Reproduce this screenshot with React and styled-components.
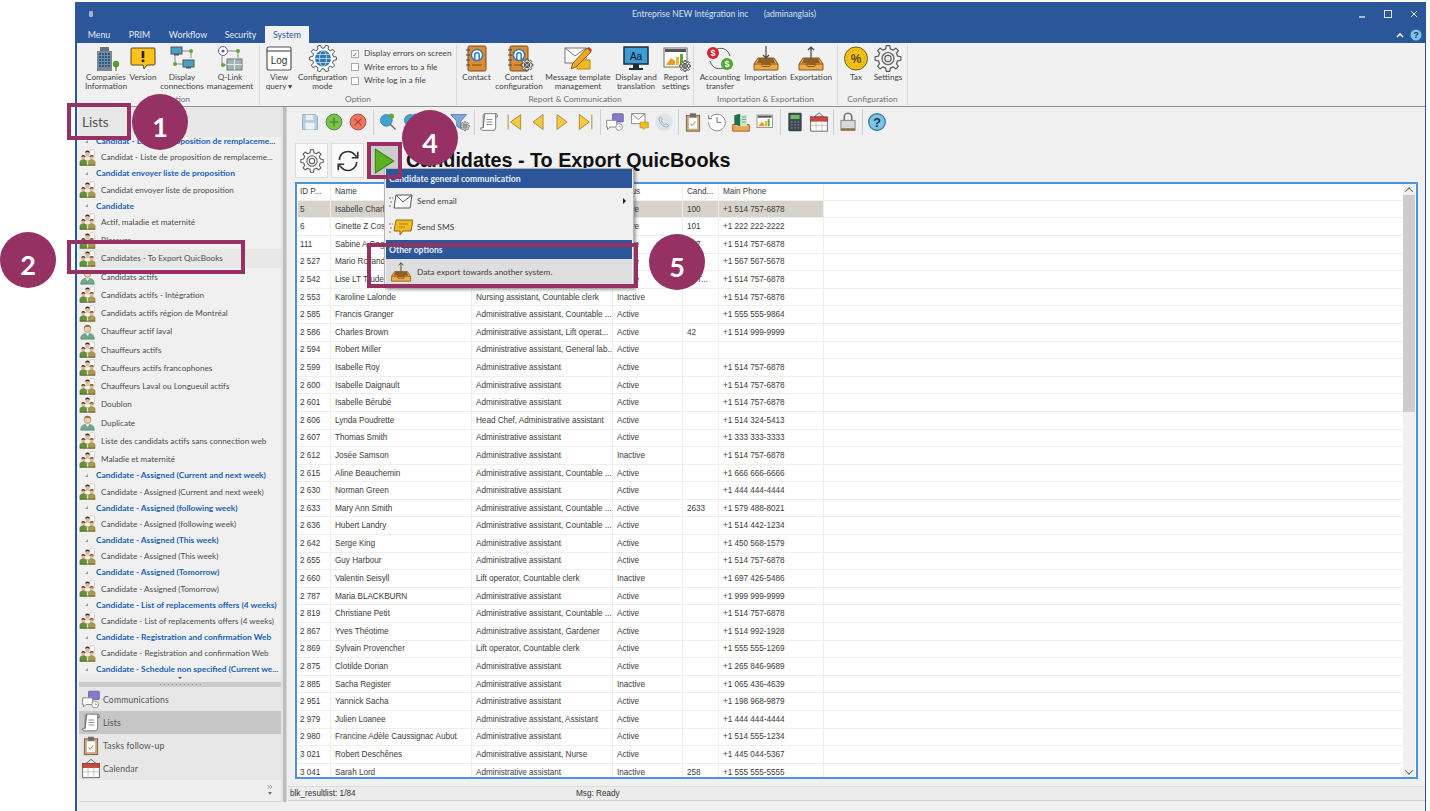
import React from 'react';
import styled, { createGlobalStyle } from 'styled-components';

const BLUE = '#2b579a';
const PLUM = '#953163';
const UI_FONT = "Lato, 'Open Sans', sans-serif";

const GlobalStyle = createGlobalStyle`
  html, body { margin: 0; padding: 0; background: #fff; }
  body { font-family: ${UI_FONT}; color: #333; }
  * { box-sizing: border-box; }
`;

const Page = styled.div`
  position: relative;
  width: 1430px;
  height: 811px;
  padding: 2px 4px 0 75px;
  overflow: hidden;
`;

const Window = styled.div`
  display: flex;
  flex-direction: column;
  height: 100%;
  background: #f0f0f0;
  border-left: 2px solid ${BLUE};
  border-right: 1px solid ${BLUE};
`;

/* title bar */
const TitleBar = styled.div`
  background: ${BLUE};
  height: 41px;
  display: flex;
  flex-direction: column;
  margin-left: -2px;
`;

const TitleRow = styled.div`
  height: 24px;
  display: flex;
  align-items: center;
  padding-left: 14px;
  color: #d8e0ef;
  font-size: 8.5px;
`;

const AppDot = styled.span`
  width: 4px;
  height: 6px;
  background: #9db2d3;
  border-radius: 1px;
`;

const TitleText = styled.div`
  margin-left: 539px;
  width: 184px;
  display: flex;
  justify-content: space-between;
  white-space: nowrap;
`;

const WinControls = styled.div`
  margin-left: auto;
  width: 68px;
  display: flex;
  justify-content: space-between;
  align-items: center;
  padding-right: 6px;
`;

const TabRow = styled.div`
  flex: 1;
  display: flex;
  align-items: flex-end;
  padding-left: 4px;
  padding-right: 3px;
`;

const Tab = styled.div`
  width: ${p => p.$w}px;
  height: 17px;
  display: flex;
  align-items: center;
  justify-content: center;
  font-size: 8.8px;
  color: ${p => (p.$active ? BLUE : '#e4eaf4')};
  background: ${p => (p.$active ? '#f1f1f1' : 'transparent')};
`;

const RibbonHelp = styled.div`
  margin-left: auto;
  display: flex;
  align-items: center;
  gap: 6px;
  height: 17px;
`;

/* ribbon */
const Ribbon = styled.div`
  height: 64px;
  display: flex;
  background: #f1f1f1;
  border-bottom: 1px solid #8f8f8f;
  padding-left: 1px;
`;

const RibbonGroup = styled.div`
  width: ${p => p.$w}px;
  height: 60px;
  margin-top: 2px;
  border-right: 1px solid #d9d9d9;
  display: flex;
  flex-direction: column;
`;

const RibbonItems = styled.div`
  flex: 1;
  display: flex;
  padding-left: ${p => p.$pad || 0}px;
`;

const RibbonItem = styled.div`
  width: ${p => p.$w}px;
  display: flex;
  flex-direction: column;
  align-items: center;
  font-size: 8.2px;
  line-height: 9.4px;
  text-align: center;
  color: #444;
  white-space: pre-line;
  svg { height: 27px; width: 30px; display: block; margin-bottom: 1px; }
`;

const RibbonLabel = styled.div`
  text-align: center;
  color: #707070;
  font-size: 8.4px;
  line-height: 11px;
  height: 11px;
`;

const Checks = styled.div`
  display: flex;
  flex-direction: column;
  gap: 4px;
  padding: 4px 0 0 2px;
`;

const CheckRow = styled.div`
  display: flex;
  align-items: center;
  gap: 5px;
  font-size: 8.3px;
  line-height: 9.5px;
  color: #444;
  white-space: nowrap;
`;

const CheckBox = styled.span`
  width: 8px;
  height: 8px;
  border: 1px solid #a9a9a9;
  background: #fff;
  font-size: 7px;
  line-height: 6px;
  color: #666;
  text-align: center;
`;

/* body */
const Body = styled.div`
  flex: 1;
  display: flex;
  min-height: 0;
`;

const Sidebar = styled.div`
  width: 204px;
  display: flex;
  flex-direction: column;
  padding-left: 2px;
`;

const PanelTitle = styled.div`
  height: 30px;
  display: flex;
  align-items: center;
  padding-left: 3px;
  font-size: 13.5px;
  color: #555;
  background: #e7e7e7;
  flex: none;
`;

const TreeList = styled.div`
  flex: 1;
  overflow: hidden;
  min-height: 0;
  background: #f0f0f0;
`;

const TreeInner = styled.div`
  margin-top: -3px;
`;

const GroupRow = styled.div`
  height: 14.1px;
  display: flex;
  align-items: center;
  color: #1a5fb4;
  font-weight: 700;
  font-size: 8.4px;
  white-space: nowrap;
  padding-left: 6px;
  gap: 8px;
`;

const Twist = styled.span`
  width: 0;
  height: 0;
  border-left: 3px solid transparent;
  border-bottom: 3px solid #999;
`;

const ItemRow = styled.div`
  height: 18.25px;
  display: flex;
  align-items: center;
  font-size: 8.15px;
  color: #4c4c4c;
  white-space: nowrap;
  background: ${p => (p.$selected ? '#e8e8e8' : 'transparent')};
  svg { width: 17px; height: 17px; flex: none; margin-right: 5px; }
`;

const ScrollBand = styled.div`
  height: 8px;
  flex: none;
  background: #eaeaea;
  display: flex;
  justify-content: center;
  align-items: center;
  &::after {
    content: '';
    border-left: 2px solid transparent;
    border-right: 2px solid transparent;
    border-top: 2px solid #555;
  }
`;

const Grip = styled.div`
  height: 5px;
  flex: none;
  background: #cbcbcb;
  display: flex;
  justify-content: center;
  align-items: center;
  &::after {
    content: '';
    width: 41px;
    height: 1px;
    background: repeating-linear-gradient(90deg, #8c8c8c 0 1px, transparent 1px 4px);
  }
`;

const NavRow = styled.div`
  height: ${p => p.$h}px;
  flex: none;
  display: flex;
  align-items: center;
  font-size: 8.7px;
  letter-spacing: 0.15px;
  color: #555;
  background: ${p => (p.$active ? '#c6c6c6' : '#e7e7e7')};
  padding-left: 2px;
  svg { width: 20px; height: 21px; margin-right: 2px; flex: none; }
`;

const NavFooter = styled.div`
  height: 22px;
  flex: none;
  display: flex;
  justify-content: flex-end;
  padding: 4px 8px 0 0;
  background: #efefef;
  border-bottom: 1px solid #d8d8d8;
`;

const MoreChevrons = styled.svg`
  width: 6px;
  height: 12px;
`;

const Splitter = styled.div`
  width: 6px;
  flex: none;
  background: #bdbdbd;
  border-left: 2px solid #e3e3e3;
  border-right: 1px solid #d5d5d5;
`;

const Main = styled.div`
  flex: 1;
  min-width: 0;
  display: flex;
  flex-direction: column;
`;

const Toolbar = styled.div`
  height: 30px;
  flex: none;
  display: flex;
  align-items: center;
  padding-left: 11px;
`;

const ToolButton = styled.div`
  width: 24.2px;
  height: 24px;
  display: flex;
  align-items: center;
  justify-content: center;
  svg { width: 20px; height: 20px; }
`;

const ToolSep = styled.div`
  width: 5px;
  height: 26px;
  flex: none;
  display: flex;
  justify-content: center;
  &::after { content: ''; width: 1px; background: #cfcfcf; }
`;

const HeadingRow = styled.div`
  height: 35px;
  margin: 6px 0 4px 8px;
  flex: none;
  display: flex;
  align-items: center;
`;

const SquareButton = styled.div`
  width: 33px;
  height: 35px;
  margin-right: 3px;
  background: ${p => (p.$active ? '#cdcdcd' : '#fafafa')};
  border: 1px solid ${p => (p.$active ? '#bbb' : '#dcdcdc')};
  display: flex;
  align-items: center;
  justify-content: center;
  svg { width: 26px; height: 26px; }
`;

const Heading = styled.h1`
  margin: 0 0 0 3px;
  font-family: 'Liberation Sans', sans-serif;
  font-size: 19.75px;
  font-weight: 700;
  color: #111;
  white-space: nowrap;
`;

const TableFrame = styled.div`
  margin: 0 7px 0 8px;
  height: 597px;
  flex: none;
  background: #fff;
  border: 2px solid #4d94dc;
  display: flex;
  overflow: hidden;
`;

const TableArea = styled.div`
  flex: 1;
  min-width: 0;
  padding-left: 1px;
  overflow: hidden;
`;

const Row = styled.div`
  display: grid;
  grid-template-columns: 33px 141px 141px 70px 36px 105px 1fr;
  height: ${p => (p.$head ? 16.8 : 17.6)}px;
  border-bottom: 1px solid #eeeeee;
  font-family: 'Liberation Sans', sans-serif;
  font-size: 8.2px;
  letter-spacing: -0.04px;
  color: #3c3c3c;
`;

const Cell = styled.div`
  display: flex;
  align-items: center;
  padding-left: ${p => (p.$first ? 2 : 4)}px;
  white-space: nowrap;
  overflow: hidden;
  border-right: ${p => (p.$last ? 'none' : '1px solid #eeeeee')};
  background: ${p => (p.$selected ? '#d6d3cc' : 'transparent')};
`;

const ScrollTrack = styled.div`
  width: 12px;
  flex: none;
  margin-right: 1px;
  background: #f0f0f0;
  display: flex;
  flex-direction: column;
  align-items: center;
  padding-top: 1px;
`;

const ScrollArrow = styled.span`
  height: 10px;
  display: flex;
  align-items: center;
  &::after {
    content: '';
    width: 5px;
    height: 5px;
    border-left: 1px solid #666;
    border-top: 1px solid #666;
    transform: ${p => (p.$down ? 'rotate(225deg) translate(1px, 1px)' : 'rotate(45deg) translate(1px, 1px)')};
  }
`;

const ScrollThumb = styled.div`
  width: 12px;
  height: 217px;
  background: #cdcdcd;
`;

const ScrollGap = styled.div`
  flex: 1;
`;

const StatusBar = styled.div`
  height: 15px;
  margin-top: 7px;
  margin-left: 1px;
  flex: none;
  display: flex;
  align-items: center;
  background: #ececec;
  border-top: 1px solid #dcdcdc;
  border-bottom: 1px solid #cfcfcf;
  font-size: 8.2px;
  color: #333;
  font-family: 'Liberation Sans', sans-serif;
`;

const StatusCell = styled.div`
  width: ${p => p.$w}px;
  padding-left: 2px;
`;

const WindowFoot = styled.div`
  height: 9px;
  flex: none;
  background: #f0f0f0;
`;

/* popup menu */
const Menu = styled.div`
  position: absolute;
  left: 384px;
  top: 168px;
  width: 250px;
  height: 120px;
  background: #f0f0f0;
  border: 1px solid #b5b5b5;
  box-shadow: 2px 2px 3px rgba(0, 0, 0, 0.35);
  font-size: 8.35px;
  color: #3f3f3f;
`;

const MenuHead = styled.div`
  height: 19px;
  margin: 0 1px;
  padding-left: 3px;
  background: ${BLUE};
  color: #e9eef7;
  font-weight: 700;
  font-size: ${p => p.$size}px;
  display: flex;
  align-items: center;
`;

const MenuItem = styled.div`
  height: 26px;
  margin: 0 1px;
  padding-left: 3px;
  display: flex;
  align-items: center;
  background: ${p => (p.$hover ? '#dedede' : 'transparent')};
  svg { width: 24px; height: 22px; margin-right: 4px; }
`;

const MenuArrow = styled.span`
  margin-left: auto;
  margin-right: 6px;
  border-left: 3px solid #222;
  border-top: 3px solid transparent;
  border-bottom: 3px solid transparent;
`;

/* call-outs drawn over the capture */
const Callout = styled.div`
  position: absolute;
  left: ${p => p.$x}px;
  top: ${p => p.$y}px;
  width: ${p => p.$w}px;
  height: ${p => p.$h}px;
  border: 4px solid ${PLUM};
`;

const Badge = styled.div`
  position: absolute;
  left: ${p => p.$x - 28}px;
  top: ${p => p.$y - 28}px;
  width: 56px;
  height: 56px;
  padding-top: 8px;
  border-radius: 50%;
  background: ${PLUM};
  color: #fff;
  font-family: Lato, sans-serif;
  font-weight: 700;
  font-size: 27px;
  display: flex;
  align-items: center;
  justify-content: center;
`;

/* drawings */
const gearPath = (cx, cy, r1, r2, n = 8) => {
  const pts = [];
  const step = (Math.PI * 2) / n;
  for (let i = 0; i < n; i++) {
    const a = i * step;
    [[-0.3, r1], [-0.17, r2], [0.17, r2], [0.3, r1]].forEach(([k, r]) => {
      pts.push(`${(cx + r * Math.cos(a + k * step)).toFixed(2)} ${(cy + r * Math.sin(a + k * step)).toFixed(2)}`);
    });
  }
  return `M${pts.join('L')}Z`;
};

const Gear = ({ cx = 16, cy = 14, r = 12, stroke = '#5a5a5a', fill = 'none', sw = 1.2 }) => (
  <g fill={fill} stroke={stroke} strokeWidth={sw} strokeLinejoin="round">
    <path d={gearPath(cx, cy, r * 0.76, r)} />
    <circle cx={cx} cy={cy} r={r * 0.46} />
    <circle cx={cx} cy={cy} r={r * 0.24} />
  </g>
);

const Building = () => (
  <svg viewBox="0 0 30 27">
    <rect x="6" y="6" width="15" height="20" fill="#7d8793" />
    <rect x="9" y="2" width="9" height="4" fill="#6a7480" />
    {[8, 11, 14, 17, 20].map(y => [8, 11, 14, 17].map(x => (
      <rect key={`${x}${y}`} x={x} y={y} width="2" height="2" fill="#1f5f8f" />
    )))}
    <circle cx="25" cy="19" r="3.2" fill="#5c9a32" />
    <rect x="24.5" y="21" width="1" height="5" fill="#6b4a2a" />
  </svg>
);

const Version = () => (
  <svg viewBox="0 0 30 27">
    <path d="M4 3h22a1 1 0 0 1 1 1v15a1 1 0 0 1-1 1h-7l-3 4-1-4H4a1 1 0 0 1-1-1V4a1 1 0 0 1 1-1z" fill="#fcc419" stroke="#5b4a1e" strokeWidth="1" />
    <rect x="13.7" y="6" width="2.6" height="7" fill="#222" />
    <rect x="13.7" y="14.5" width="2.6" height="2.6" fill="#222" />
  </svg>
);

const Connections = () => (
  <svg viewBox="0 0 30 27">
    <path d="M8 10v9h8M12 6h12v7" fill="none" stroke="#8a8a8a" />
    <rect x="4" y="2" width="11" height="7" fill="#4a9fc9" stroke="#555" />
    <rect x="16" y="15" width="11" height="7" fill="#4a9fc9" stroke="#555" />
    <rect x="7" y="9" width="5" height="1.5" fill="#555" />
    <rect x="19" y="22" width="5" height="1.5" fill="#555" />
    <circle cx="24" cy="6" r="2" fill="#62a83a" />
    <circle cx="8" cy="19" r="2" fill="#62a83a" />
  </svg>
);

const QLink = () => (
  <svg viewBox="0 0 30 27">
    <circle cx="8" cy="6" r="4.5" fill="#fff" stroke="#6a5aa8" />
    <circle cx="8" cy="6" r="1.6" fill="#6a5aa8" />
    <path d="M13 6h10v7M7 11v9h4" fill="none" stroke="#8a8a8a" />
    <circle cx="23" cy="6" r="2" fill="#62a83a" />
    <circle cx="8" cy="20" r="2" fill="#62a83a" />
    <rect x="12" y="14" width="15" height="11" fill="#9fb4b4" stroke="#6d7878" />
    <path d="M19.5 14v11M12 19.5h15" stroke="#e8e8e8" />
  </svg>
);

const LogWindow = () => (
  <svg viewBox="0 0 30 27">
    <rect x="3" y="2" width="24" height="23" rx="1.5" fill="#fff" stroke="#555" strokeWidth="1.2" />
    <path d="M3 6h24" stroke="#555" strokeWidth="1.2" />
    <text x="15" y="19" fontSize="10" textAnchor="middle" fill="#333" fontFamily="Liberation Sans, sans-serif">Log</text>
  </svg>
);

const GlobeGear = () => (
  <svg viewBox="0 0 30 27">
    <path d={gearPath(15, 13.5, 10.5, 13.5, 10)} fill="#fff" stroke="#555" />
    <circle cx="15" cy="13.5" r="8" fill="#2f78b5" />
    <g fill="none" stroke="#cfe3f3" strokeWidth="0.8">
      <ellipse cx="15" cy="13.5" rx="3.5" ry="8" />
      <path d="M7 13.5h16M8.2 9.5h13.6M8.2 17.5h13.6" />
    </g>
  </svg>
);

const ContactBook = ({ gear }) => (
  <svg viewBox="0 0 30 27">
    <rect x="6" y="1" width="18" height="25" rx="1.5" fill="#d98b35" stroke="#7d4d17" />
    <path d="M4 5h4M4 10h4M4 15h4M4 20h4" stroke="#444" strokeWidth="1.2" />
    <circle cx="15" cy="10" r="5.6" fill="#fff" stroke="#2f78b5" strokeWidth="1.5" />
    <path d="M12.8 15v-5a2.2 2.2 0 0 1 4.4 0v5" fill="none" stroke="#2f78b5" strokeWidth="1.5" />
    <path d="M10 20h10" stroke="#7d4d17" />
    {gear && <Gear cx={23} cy={20} r={6} stroke="#444" fill="#e8e8e8" sw={1} />}
  </svg>
);

const MessagePencil = () => (
  <svg viewBox="0 0 30 27">
    <rect x="2" y="3" width="21" height="15" fill="#fff" stroke="#777" />
    <path d="M2 3l10 8 11-8" fill="none" stroke="#777" />
    <rect x="14" y="15" width="13" height="9" fill="#f2b91d" stroke="#b98a12" />
    <path d="M8 24l2-6L24 3l4 4L13 22z" fill="#f4a521" stroke="#6b4a12" strokeWidth="0.8" />
    <path d="M24 3l4 4 1-2-3-3z" fill="#c8372d" />
  </svg>
);

const Monitor = () => (
  <svg viewBox="0 0 30 27">
    <rect x="3" y="2" width="24" height="17" fill="#3f9bd8" stroke="#1f2d3a" strokeWidth="1.5" />
    <text x="15" y="15" fontSize="10" textAnchor="middle" fill="#111" fontFamily="Liberation Sans, sans-serif">Aa</text>
    <rect x="12" y="19" width="6" height="4" fill="#1f2d3a" />
    <rect x="8" y="23" width="14" height="2" fill="#1f2d3a" />
  </svg>
);

const ReportChart = ({ gear = true }) => (
  <svg viewBox="0 0 30 27">
    <rect x="3" y="3" width="23" height="19" fill="#fff" stroke="#6d6d6d" />
    <rect x="4" y="4" width="21" height="3" fill="#555" />
    <path d="M5 20l5-7 4 3v4z" fill="#e89b2f" />
    <rect x="15" y="12" width="3" height="8" fill="#e8b62f" />
    <rect x="19" y="9" width="3" height="11" fill="#62a83a" />
    {gear && <Gear cx={24} cy={21} r={5.5} stroke="#444" fill="#e8e8e8" sw={1} />}
  </svg>
);

const Accounting = () => (
  <svg viewBox="0 0 30 27">
    <path d="M12 4c7-2 11 1 13 7M18 23C11 25 7 22 5 16" fill="none" stroke="#555" />
    <circle cx="8" cy="8" r="6" fill="#d4232b" />
    <circle cx="22" cy="19" r="6" fill="#4ea72e" />
    <text x="8" y="11" fontSize="9" fontWeight="700" textAnchor="middle" fill="#fff" fontFamily="Liberation Sans, sans-serif">$</text>
    <text x="22" y="22" fontSize="9" fontWeight="700" textAnchor="middle" fill="#fff" fontFamily="Liberation Sans, sans-serif">$</text>
  </svg>
);

const Tray = ({ dir }) => (
  <svg viewBox="0 0 30 27">
    <path d="M7 13h16l4 6v6H3v-6z" fill="#eda94a" stroke="#8a5a1c" />
    <path d="M8 13h14l2 5h-4l-1 2h-8l-1-2H6z" fill="#8f5f24" />
    <path d="M3 19h7l1.5 2.5h7L20 19h7" fill="none" stroke="#8a5a1c" />
    {dir === 'down' && <path d="M15 1v12M12 10l3 3 3-3" fill="none" stroke="#444" strokeWidth="1.2" />}
    {dir === 'up' && <path d="M15 13V2M12 5l3-3 3 3" fill="none" stroke="#444" strokeWidth="1.2" />}
  </svg>
);

const Tax = () => (
  <svg viewBox="0 0 30 27">
    <circle cx="15" cy="13.5" r="11.5" fill="#f7c21a" stroke="#6d5a14" />
    <circle cx="15" cy="13.5" r="8.5" fill="none" stroke="#c99a12" strokeDasharray="1.5 1.5" />
    <text x="15" y="18" fontSize="12" fontWeight="700" textAnchor="middle" fill="#5b4a1e" fontFamily="Liberation Sans, sans-serif">%</text>
  </svg>
);

const Settings = () => (
  <svg viewBox="0 0 30 27"><Gear cx={15} cy={13.5} r={13} /></svg>
);

const People = ({ single }) => (
  <svg viewBox="0 0 20 20">
    {single ? (
      <>
        <path d="M2 19c0-5 3-7 8-7s8 2 8 7z" fill="#6fa98a" stroke="#44705a" strokeWidth="0.6" />
        <path d="M7.5 12l2.5 3 2.5-3z" fill="#fff" />
        <circle cx="10" cy="7" r="4" fill="#f0cba8" stroke="#7d5a3c" strokeWidth="0.5" />
        <path d="M6 6c0-3 2-4 4-4s4 1 4 4l-2-1.5H8z" fill="#8a6a4a" />
      </>
    ) : (
      <>
        <rect x="13" y="1" width="5.5" height="7" fill="#fff" stroke="#b5b5b5" strokeWidth="0.6" />
        <path d="M5.5 14c0-3.5 1.7-6 4.5-6s4.5 2.5 4.5 6z" fill="#f4f1e8" stroke="#5a4a3a" strokeWidth="0.5" />
        <circle cx="10" cy="5" r="2.6" fill="#e7b98d" />
        <path d="M7.4 4.5c0-2 1.2-2.8 2.6-2.8s2.6.8 2.6 2.8l-2.6-1z" fill="#3a2a20" />
        <circle cx="5" cy="10" r="2.3" fill="#e7b98d" />
        <path d="M2.8 9.5c0-1.8 1-2.4 2.2-2.4s2.2.6 2.2 2.4L5 8.7z" fill="#5a3d24" />
        <path d="M1 19v-3.5c0-2 1.6-3 4-3s4 1 4 3V19z" fill="#5f9438" stroke="#3f6a22" strokeWidth="0.4" />
        <circle cx="15" cy="10" r="2.3" fill="#e7b98d" />
        <path d="M12.8 9.5c0-1.8 1-2.4 2.2-2.4s2.2.6 2.2 2.4l-2.2-.8z" fill="#7a5a2c" />
        <path d="M11 19v-3.5c0-2 1.6-3 4-3s4 1 4 3V19z" fill="#a99a45" stroke="#75692b" strokeWidth="0.4" />
        <path d="M1 19h18" stroke="#6b5a30" />
      </>
    )}
  </svg>
);

const CommIcon = () => (
  <svg viewBox="0 0 24 24">
    <rect x="9" y="2" width="13" height="10" rx="1" fill="#8878cc" stroke="#5a4fa0" strokeWidth="0.8" />
    <path d="M2 10h12v8H6l-3 3v-3H2z" fill="#fff" stroke="#777" />
    <circle cx="17" cy="18" r="4" fill="#fff" stroke="#888" />
    <path d="M17 16v2h2" fill="none" stroke="#888" strokeWidth="0.8" />
  </svg>
);

const Scroll = () => (
  <svg viewBox="0 0 24 24">
    <path d="M7 2h13v17a3 3 0 0 1-3 3H4a2.5 2.5 0 0 1-2-3h3z" fill="#fff" stroke="#666" />
    <path d="M7 2a2.5 2.5 0 0 0-2 2.5V19M20 2a2 2 0 0 1 2 2v2h-2" fill="none" stroke="#666" />
    <path d="M9 9h7M9 12h7M9 15h7" stroke="#777" />
  </svg>
);

const Clipboard = () => (
  <svg viewBox="0 0 24 24">
    <rect x="4" y="4" width="16" height="19" fill="#c9a77a" stroke="#6d5236" />
    <rect x="7" y="7" width="10" height="13" fill="#fff" />
    <rect x="8.5" y="1.5" width="7" height="5" fill="#6d6d6d" />
    <path d="M9 14l2 2.5 4-5" fill="none" stroke="#62a83a" strokeWidth="1.2" />
  </svg>
);

const CalendarIcon = () => (
  <svg viewBox="0 0 24 24">
    <path d="M12 1l6 5H6z" fill="none" stroke="#555" />
    <rect x="2" y="6" width="20" height="17" fill="#fff" stroke="#555" />
    <rect x="2" y="6" width="20" height="5" fill="#d0453c" stroke="#8a2a24" strokeWidth="0.6" />
    <path d="M2 16h20M8.5 11v12M15.5 11v12" stroke="#bbb" />
  </svg>
);

const Save = () => (
  <svg viewBox="0 0 24 24">
    <path d="M3 3h15l3 3v15H3z" fill="#b9cde0" stroke="#93a7ba" />
    <rect x="7" y="3.5" width="9" height="6" fill="#e7eef5" />
    <rect x="6.5" y="13" width="11" height="8" fill="#edf2f7" />
  </svg>
);

const Disc = ({ fill, stroke, mark }) => (
  <svg viewBox="0 0 24 24">
    <circle cx="12" cy="12" r="9.5" fill={fill} stroke={stroke} />
    <path d={mark} fill="none" stroke={stroke} strokeWidth="1.3" />
  </svg>
);

const Search = ({ dot = '#62a83a' }) => (
  <svg viewBox="0 0 24 24">
    <path d="M14 14l7 7" stroke="#666" strokeWidth="1.6" />
    <circle cx="10" cy="10" r="7" fill="#3fa5cf" stroke="#2b7ea3" />
    <circle cx="16" cy="5" r="3.2" fill={dot} />
  </svg>
);

const Filter = () => (
  <svg viewBox="0 0 24 24">
    <path d="M1 3h19l-7 8v9l-5-3v-6z" fill="#7fa6d6" stroke="#5579a8" />
    <Gear cx={18} cy={17} r={5.5} stroke="#555" fill="#ddd" sw={0.8} />
  </svg>
);

const Nav = ({ d }) => (
  <svg viewBox="0 0 24 24"><path d={d} fill="#f6c945" stroke="#a8892a" strokeWidth="1.1" strokeLinejoin="round" /></svg>
);

const MailBubble = () => (
  <svg viewBox="0 0 24 24">
    <rect x="2" y="2" width="16" height="12" fill="#fff" stroke="#777" />
    <path d="M2 2l8 7 8-7" fill="none" stroke="#777" />
    <path d="M12 12h10v7h-4l-1.5 2-1-2H12z" fill="#f2b91d" stroke="#a8892a" strokeWidth="0.7" />
  </svg>
);

const Phone = () => (
  <svg viewBox="0 0 24 24">
    <circle cx="12" cy="12" r="10.5" fill="#dde5e8" />
    <path d="M8 6l2 3-1 1.5c.5 2 2 3.5 4 4.5l1.5-1 3 2-1.5 2c-5 .5-10-5-10-10.5z" fill="none" stroke="#8fa3aa" />
  </svg>
);

const History = () => (
  <svg viewBox="0 0 24 24">
    <path d="M4.5 6A10 10 0 1 1 2 12" fill="#fff" stroke="#777" />
    <path d="M2 4v4h4M12 6v6.5h5" fill="none" stroke="#555" />
  </svg>
);

const ExcelTray = () => (
  <svg viewBox="0 0 24 24">
    <path d="M2 15h20v8H2z" fill="#eda94a" stroke="#8a5a1c" />
    <rect x="6" y="3" width="13" height="14" fill="#cfe5d5" />
    <path d="M4 4l7-2v15l-7-2z" fill="#1e7145" />
    <path d="M13 6h5M13 9h5M13 12h5" stroke="#5b9a73" />
  </svg>
);

const Calculator = () => (
  <svg viewBox="0 0 24 24">
    <rect x="4" y="1" width="16" height="22" rx="1" fill="#3c4650" />
    <rect x="6.5" y="3.5" width="11" height="5" fill="#6fbf57" />
    <path d="M7 12h10M7 15.5h10M7 19h10" stroke="#7d8791" strokeDasharray="2 2" strokeWidth="1.6" />
  </svg>
);

const Lock = () => (
  <svg viewBox="0 0 24 24">
    <path d="M7.5 10V6a4.5 4.5 0 0 1 9 0v4" fill="none" stroke="#777" strokeWidth="2" />
    <rect x="3.5" y="10" width="17" height="12" fill="#d8d8d8" stroke="#777" />
    <rect x="3.5" y="19.5" width="17" height="2.5" fill="#8a7440" />
  </svg>
);

const Help = ({ r = 10 }) => (
  <svg viewBox="0 0 24 24">
    <circle cx="12" cy="12" r={r} fill="#7cc3e6" stroke="#2b6f99" strokeWidth="1.4" />
    <text x="12" y="17.5" textAnchor="middle" fontSize="15" fontWeight="700" fill="#12344d" fontFamily="Liberation Sans, sans-serif">?</text>
  </svg>
);

const Refresh = () => (
  <svg viewBox="0 0 24 24">
    <path d="M4 11a8 8 0 0 1 14-5l2 2M20 13a8 8 0 0 1-14 5l-2-2" fill="none" stroke="#333" strokeWidth="1.5" />
    <path d="M21 3.5V9h-5.5M3 20.5V15h5.5" fill="none" stroke="#333" strokeWidth="1.5" />
  </svg>
);

const Play = () => (
  <svg viewBox="0 0 24 24"><path d="M4 1l17 11L4 23z" fill="#58b21f" stroke="#3d7f15" /></svg>
);

const SendMail = () => (
  <svg viewBox="0 0 24 22">
    <path d="M0 8h4M1 12h3M0 16h3" stroke="#777" strokeDasharray="2 1" />
    <path d="M7 5h16l-2 13H5z" fill="#fff" stroke="#555" />
    <path d="M7 5l7 7 9-7" fill="none" stroke="#555" />
  </svg>
);

const SendSms = () => (
  <svg viewBox="0 0 24 22">
    <path d="M0 8h4M1 12h3M0 16h3" stroke="#777" strokeDasharray="2 1" />
    <path d="M7 4h17l-2 11H14l-3 4v-4H5z" fill="#f2b91d" stroke="#8a6a14" />
    <path d="M10 8h9M10 11h6" stroke="#a8892a" />
  </svg>
);

/* data */
const ribbon = [
  { w: 182, label: 'Information', pad: 7, items: [
    [Building, 'Companies\nInformation', 42], [Version, 'Version', 32], [Connections, 'Display\nconnections', 46], [QLink, 'Q-Link\nmanagement', 50],
  ] },
  { w: 197, label: 'Option', pad: 2, items: [
    [LogWindow, 'View\nquery ▾', 34], [GlobeGear, 'Configuration\nmode', 53],
  ], checks: true },
  { w: 237, label: 'Report & Communication', pad: 1, items: [
    [() => <ContactBook />, 'Contact', 37], [() => <ContactBook gear />, 'Contact\nconfiguration', 48], [MessagePencil, 'Message template\nmanagement', 70], [Monitor, 'Display and\ntranslation', 46], [ReportChart, 'Report\nsettings', 34],
  ] },
  { w: 144, label: 'Importation & Exportation', pad: 3, items: [
    [Accounting, 'Accounting\ntransfer', 46], [() => <Tray dir="down" />, 'Importation', 45], [() => <Tray dir="up" />, 'Exportation', 46],
  ] },
  { w: 70, label: 'Configuration', pad: 3, items: [
    [Tax, 'Tax', 30], [Settings, 'Settings', 34],
  ] },
];

const h = text => ({ text, head: true });
const i = (text, extra) => ({ text, ...extra });
const tree = [
  h('Candidat - Liste de proposition de remplaceme...'), i('Candidat - Liste de proposition de remplaceme...'),
  h('Candidat envoyer liste de proposition'), i('Candidat envoyer liste de proposition'),
  h('Candidate'), i('Actif, maladie et maternité'), i('Blessure'),
  i('Candidates - To Export QuicBooks', { selected: true }), i('Candidats actifs', { single: true }),
  i('Candidats actifs - Intégration'), i('Candidats actifs région de Montréal'), i('Chauffeur actif laval', { single: true }),
  i('Chauffeurs actifs'), i('Chauffeurs actifs francophones'), i('Chauffeurs Laval ou Longueuil actifs'),
  i('Doublon'), i('Duplicate', { single: true }), i('Liste des candidats actifs sans connection web'), i('Maladie et maternité'),
  h('Candidate - Assigned (Current and next week)'), i('Candidate - Assigned (Current and next week)'),
  h('Candidate - Assigned (following week)'), i('Candidate - Assigned (following week)'),
  h('Candidate - Assigned (This week)'), i('Candidate - Assigned (This week)'),
  h('Candidate - Assigned (Tomorrow)'), i('Candidate - Assigned (Tomorrow)'),
  h('Candidate - List of replacements offers (4 weeks)'), i('Candidate - List of replacements offers (4 weeks)'),
  h('Candidate - Registration and confirmation Web'), i('Candidate - Registration and confirmation Web'),
  h('Candidate - Schedule non specified (Current we...'),
];

const AA = 'Administrative assistant';
const M = '+1 514 757-6878';
const rows = [
  ['5', 'Isabelle Charlebois', AA, 'Active', '100', M],
  ['6', 'Ginette Z Cossette', AA, 'Active', '101', '+1 222 222-2222'],
  ['111', 'Sabine A Gagnon', AA, 'Active', '107', M],
  ['2 527', 'Mario Rollande', AA, 'Active', '', '+1 567 567-5678'],
  ['2 542', 'Lise LT Trudeau', AA, 'Active', 'LST...', M],
  ['2 553', 'Karoline Lalonde', 'Nursing assistant, Countable clerk', 'Inactive', '', M],
  ['2 585', 'Francis Granger', 'Administrative assistant, Countable ...', 'Active', '', '+1 555 555-9864'],
  ['2 586', 'Charles Brown', 'Administrative assistant, Lift operat...', 'Active', '42', '+1 514 999-9999'],
  ['2 594', 'Robert Miller', 'Administrative assistant, General lab...', 'Active', '', ''],
  ['2 599', 'Isabelle Roy', AA, 'Active', '', M],
  ['2 600', 'Isabelle Daignault', AA, 'Active', '', M],
  ['2 601', 'Isabelle Bérubé', AA, 'Active', '', M],
  ['2 606', 'Lynda Poudrette', 'Head Chef, Administrative assistant', 'Active', '', '+1 514 324-5413'],
  ['2 607', 'Thomas Smith', AA, 'Active', '', '+1 333 333-3333'],
  ['2 612', 'Josée Samson', AA, 'Inactive', '', M],
  ['2 615', 'Aline Beauchemin', 'Administrative assistant, Countable ...', 'Active', '', '+1 666 666-6666'],
  ['2 630', 'Norman Green', AA, 'Active', '', '+1 444 444-4444'],
  ['2 633', 'Mary Ann Smith', 'Administrative assistant, Countable ...', 'Active', '2633', '+1 579 488-8021'],
  ['2 636', 'Hubert Landry', 'Administrative assistant, Countable ...', 'Active', '', '+1 514 442-1234'],
  ['2 642', 'Serge King', AA, 'Active', '', '+1 450 568-1579'],
  ['2 655', 'Guy Harbour', AA, 'Active', '', M],
  ['2 660', 'Valentin Seisyll', 'Lift operator, Countable clerk', 'Inactive', '', '+1 697 426-5486'],
  ['2 787', 'Maria BLACKBURN', AA, 'Active', '', '+1 999 999-9999'],
  ['2 819', 'Christiane Petit', 'Administrative assistant, Countable ...', 'Active', '', M],
  ['2 867', 'Yves Théotime', 'Administrative assistant, Gardener', 'Active', '', '+1 514 992-1928'],
  ['2 869', 'Sylvain Provencher', 'Lift operator, Countable clerk', 'Active', '', '+1 555 555-1269'],
  ['2 875', 'Clotilde Dorian', AA, 'Active', '', '+1 265 846-9689'],
  ['2 885', 'Sacha Register', AA, 'Inactive', '', '+1 065 436-4639'],
  ['2 951', 'Yannick Sacha', AA, 'Active', '', '+1 198 968-9879'],
  ['2 979', 'Julien Loanee', 'Administrative assistant, Assistant', 'Active', '', '+1 444 444-4444'],
  ['2 980', 'Francine Adèle Caussignac Aubut', AA, 'Active', '', '+1 514 555-1234'],
  ['3 021', 'Robert Deschênes', 'Administrative assistant, Nurse', 'Active', '', '+1 445 044-5367'],
  ['3 041', 'Sarah Lord', AA, 'Inactive', '258', '+1 555 555-5555'],
];

const toolbar = [
  <Save />, <Disc fill="#7cc24a" stroke="#3d7f25" mark="M12 7v10M7 12h10" />, <Disc fill="#ee7560" stroke="#a83f30" mark="M8 8l8 8M16 8l-8 8" />, 'sep',
  <Search />, <Search dot="#3fa5cf" />, <Search dot="#e89b2f" />, <Filter />, 'sep',
  <Scroll />, <Nav d="M5 3v18M20 3v18L8 12z" />, <Nav d="M18 3v18L6 12z" />, <Nav d="M6 3v18l12-9z" />, <Nav d="M19 3v18M4 3v18l12-9z" />, 'sep',
  <CommIcon />, <MailBubble />, <Phone />, 'sep',
  <Clipboard />, <History />, <ExcelTray />, <ReportChart gear={false} />, 'sep',
  <Calculator />, <CalendarIcon />, 'sep', <Lock />, 'sep', <Help />,
];

const nav = [
  ['Communications', <CommIcon />, 24], ['Lists', <Scroll />, 23, true], ['Tasks follow-up', <Clipboard />, 23], ['Calendar', <CalendarIcon />, 23],
];

export default function App() {
  return (
    <Page>
      <GlobalStyle />
      <Window>
        <TitleBar>
          <TitleRow>
            <AppDot />
            <TitleText>
              <span>Entreprise NEW Intégration inc</span>
              <span>(adminanglais)</span>
            </TitleText>
            <WinControls>
              <svg width="10" height="10" viewBox="0 0 10 10"><path d="M2 8h6" stroke="#dfe6f2" strokeWidth="1.4" /></svg>
              <svg width="10" height="10" viewBox="0 0 10 10"><rect x="1.5" y="1.5" width="7" height="7" fill="none" stroke="#dfe6f2" /></svg>
              <svg width="10" height="10" viewBox="0 0 10 10"><path d="M2 2l6 6M8 2l-6 6" stroke="#dfe6f2" /></svg>
            </WinControls>
          </TitleRow>
          <TabRow>
            <Tab $w={40}>Menu</Tab>
            <Tab $w={41}>PRIM</Tab>
            <Tab $w={56}>Workflow</Tab>
            <Tab $w={49}>Security</Tab>
            <Tab $w={44} $active>System</Tab>
            <RibbonHelp>
              <svg width="8" height="8" viewBox="0 0 8 8"><path d="M1 6l3-3 3 3" fill="none" stroke="#fff" strokeWidth="1.6" /></svg>
              <svg width="12" height="12" viewBox="0 0 24 24"><circle cx="12" cy="12" r="11" fill="#7cc3e6" /><text x="12" y="18" textAnchor="middle" fontSize="17" fontWeight="700" fill="#12344d" fontFamily="Liberation Sans, sans-serif">?</text></svg>
            </RibbonHelp>
          </TabRow>
        </TitleBar>

        <Ribbon>
          {ribbon.map(group => (
            <RibbonGroup key={group.label} $w={group.w}>
              <RibbonItems $pad={group.pad}>
                {group.items.map(([Icon, label, w]) => (
                  <RibbonItem key={label} $w={w}>
                    <Icon />
                    {label}
                  </RibbonItem>
                ))}
                {group.checks && (
                  <Checks>
                    <CheckRow><CheckBox>✓</CheckBox>Display errors on screen</CheckRow>
                    <CheckRow><CheckBox />Write errors to a file</CheckRow>
                    <CheckRow><CheckBox />Write log in a file</CheckRow>
                  </Checks>
                )}
              </RibbonItems>
              <RibbonLabel>{group.label}</RibbonLabel>
            </RibbonGroup>
          ))}
        </Ribbon>

        <Body>
          <Sidebar>
            <PanelTitle>Lists</PanelTitle>
            <TreeList>
              <TreeInner>
                {tree.map((row, idx) => (row.head ? (
                  <GroupRow key={idx}><Twist />{row.text}</GroupRow>
                ) : (
                  <ItemRow key={idx} $selected={row.selected}><People single={row.single} />{row.text}</ItemRow>
                )))}
              </TreeInner>
            </TreeList>
            <ScrollBand />
            <Grip />
            {nav.map(([label, icon, height, active]) => (
              <NavRow key={label} $h={height} $active={active}>{icon}{label}</NavRow>
            ))}
            <NavFooter>
              <MoreChevrons viewBox="0 0 6 12">
                <path d="M0.5 1l2 2-2 2M3 1l2 2-2 2" fill="none" stroke="#888" strokeWidth="0.7" />
                <path d="M1 8h4L3 11z" fill="#777" />
              </MoreChevrons>
            </NavFooter>
          </Sidebar>
          <Splitter />
          <Main>
            <Toolbar>
              {toolbar.map((item, idx) => (item === 'sep'
                ? <ToolSep key={idx} />
                : <ToolButton key={idx}>{item}</ToolButton>))}
            </Toolbar>
            <HeadingRow>
              <SquareButton><svg viewBox="0 0 30 30"><Gear cx={15} cy={15} r={13} /></svg></SquareButton>
              <SquareButton><Refresh /></SquareButton>
              <SquareButton $active><Play /></SquareButton>
              <Heading>Candidates - To Export QuicBooks</Heading>
            </HeadingRow>
            <TableFrame>
              <TableArea>
                <Row $head>
                  {['ID P...', 'Name', 'Functions', 'Status', 'Cand...', 'Main Phone', ''].map((t, c) => (
                    <Cell key={c} $first={c === 0} $last={c === 6}>{t}</Cell>
                  ))}
                </Row>
                {rows.map((row, r) => (
                  <Row key={row[0]}>
                    {row.map((t, c) => <Cell key={c} $first={c === 0} $selected={r === 0}>{t}</Cell>)}
                    <Cell $last />
                  </Row>
                ))}
              </TableArea>
              <ScrollTrack>
                <ScrollArrow />
                <ScrollThumb />
                <ScrollGap />
                <ScrollArrow $down />
              </ScrollTrack>
            </TableFrame>
            <StatusBar>
              <StatusCell $w={286}>blk_resultlist: 1/84</StatusCell>
              <StatusCell $w={200}>Msg: Ready</StatusCell>
            </StatusBar>
          </Main>
        </Body>
        <WindowFoot />
      </Window>

      <Menu>
        <MenuHead $size={8.7}>Candidate general communication</MenuHead>
        <MenuItem><SendMail />Send email<MenuArrow /></MenuItem>
        <MenuItem><SendSms />Send SMS</MenuItem>
        <MenuHead $size={8.6}>Other options</MenuHead>
        <MenuItem $hover><Tray dir="up" />Data export towards another system.</MenuItem>
      </Menu>

      <Callout $x={67} $y={103} $w={64} $h={37} />
      <Callout $x={67} $y={240} $w={178} $h={34} />
      <Callout $x={367} $y={142} $w={35} $h={37} />
      <Callout $x={367} $y={243} $w={271} $h={45} />
      <Badge $x={160} $y={122}>1</Badge>
      <Badge $x={28} $y={260}>2</Badge>
      <Badge $x={430} $y={138}>4</Badge>
      <Badge $x={677} $y={262}>5</Badge>
    </Page>
  );
}
